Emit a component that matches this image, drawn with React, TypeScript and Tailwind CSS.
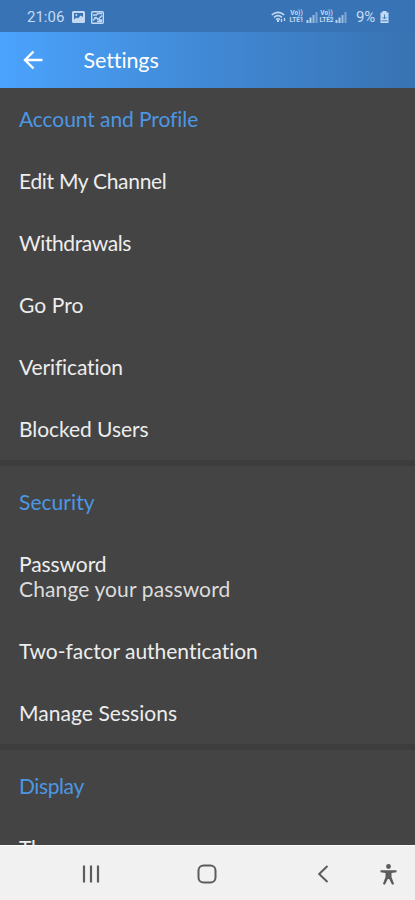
import React from "react";

interface SettingsItem {
    label: string;
    spacing: string;
    detail?: string;
    detailSpacing?: string;
}

interface SettingsGroup {
    title: string;
    spacing: string;
    items: SettingsItem[];
}

const groups: SettingsGroup[] = [
    {
        title: "Account and Profile",
        spacing: "tracking-[-0.08px]",
        items: [
            { label: "Edit My Channel", spacing: "tracking-[-0.3px]" },
            { label: "Withdrawals", spacing: "tracking-[-0.4px]" },
            { label: "Go Pro", spacing: "tracking-[0.1px]" },
            { label: "Verification", spacing: "tracking-[-0.13px]" },
            { label: "Blocked Users", spacing: "tracking-[-0.06px]" },
        ],
    },
    {
        title: "Security",
        spacing: "tracking-[0.05px]",
        items: [
            {
                label: "Password",
                spacing: "tracking-[-0.08px]",
                detail: "Change your password",
                detailSpacing: "tracking-[0.12px]",
            },
            { label: "Two-factor authentication", spacing: "tracking-[-0.03px]" },
            { label: "Manage Sessions", spacing: "tracking-[0.06px]" },
        ],
    },
    {
        title: "Display",
        spacing: "tracking-[-0.4px]",
        items: [{ label: "Theme", spacing: "tracking-[-0.3px]" }],
    },
];

const Signal: React.FC = () => (
    <svg className="w-[12px] h-[12px]" viewBox="0 0 12 12" fill="currentColor">
        <rect x="0.5" y="9" width="2" height="3" opacity="0.9" />
        <rect x="3.5" y="6.5" width="2" height="5.5" opacity="0.9" />
        <rect x="6.5" y="4" width="2" height="8" opacity="0.7" />
        <rect x="9.5" y="1" width="2" height="11" opacity="0.5" />
    </svg>
);

// Carrier tag in two stacked lines
const Volte: React.FC<{ line: string }> = ({ line }) => (
    <span className="flex w-[15px] flex-col items-center text-[6.5px] leading-[7px] font-bold">
        <span>Vo))</span>
        <span>{line}</span>
    </span>
);

const StatusBar: React.FC = () => (
    <div className="flex h-8 shrink-0 items-center bg-[#3874b5] pt-[2px] pl-[27px] font-[Roboto,sans-serif] text-[#c5daf2]">
        <span className="w-[38px] text-[15px] leading-[18px]">21:06</span>
        {/* Notification icons */}
        <svg className="ml-[7px] w-[13px] h-[12px]" viewBox="0 0 13 12">
            <rect width="13" height="12" rx="1.5" fill="currentColor" />
            <path d="M2 2h9v4L8.500 4.500 6 7.500 4.500 6.500 2 8.500z" fill="#3874b5" />
            <circle cx="4.300" cy="4" r="1" fill="currentColor" />
        </svg>
        <svg className="ml-[6px] w-[13px] h-[13px]" viewBox="0 0 13 13" fill="none" stroke="currentColor">
            <rect x="0.700" y="0.700" width="11.600" height="11.600" rx="1" strokeWidth="1.400" />
            <path d="M2 4h3.500l1-1.500h4.500M2 9.500l3-3 2 2 4-4M6 10.500h5M3 7h2M8 9h3" strokeWidth="1.300" />
        </svg>
        <div className="ml-[167px] flex items-center">
            <svg className="w-[16px] h-[12px]" viewBox="0 0 16 12" fill="none" stroke="currentColor">
                <path d="M0.800 3.800Q7 -1.200 13.200 3.800M3 6.300Q7 3 11 6.300M5 8.600Q7 7 9 8.600" strokeWidth="1.600" />
                <path d="M7 9v2" strokeWidth="2" />
                <path d="M10.500 8v3M13.500 7v3" strokeWidth="1.300" />
            </svg>
            <div className="ml-[2px]"><Volte line="LTE1" /></div>
            <div className="ml-[2px]"><Signal /></div>
            <div className="ml-[1px]"><Volte line="LTE2" /></div>
            <div className="ml-[1px]"><Signal /></div>
            <span className="ml-[9px] w-[21px] text-[15px] leading-[18px] tracking-[-0.3px]">9%</span>
            <svg className="ml-[3px] w-[9px] h-[12px]" viewBox="0 0 9 12">
                <path d="M2.500 0h4v1.500h2V12h-8V1.500h2z" fill="currentColor" />
                <path d="M4.500 3.500v4M2.500 6l2 2 2-2M1.500 9.800h6" fill="none" stroke="#3874b5" strokeWidth="0.9" />
            </svg>
        </div>
    </div>
);

const AppBar: React.FC = () => (
    <header className="flex h-14 shrink-0 items-center bg-linear-to-r from-[#4ba3fd] via-[#4189d5] to-[#3873b3] pl-[23px] text-white">
        <svg className="w-5 h-5" viewBox="0 0 20 20" fill="none" stroke="currentColor" strokeWidth="2.400">
            <path d="M19.500 10H2M10.500 1.500L2 10l8.500 8.500" />
        </svg>
        <h1 className="ml-[40.5px] text-[21.5px] leading-6 tracking-[-0.1px]">Settings</h1>
    </header>
);

const NavBar: React.FC = () => (
    <nav className="flex h-[55px] shrink-0 items-center border-t border-white bg-[#f1f1f1] pl-[82px] pt-[2px] text-[#5c5c5c]">
        <svg className="w-[18px] h-[18px]" viewBox="0 0 18 18" stroke="currentColor" strokeWidth="2.200">
            <path d="M2 0.500v17M9 0.500v17M16 0.500v17" />
        </svg>
        <svg className="ml-[97px] w-5 h-5" viewBox="0 0 20 20" fill="none" stroke="currentColor" strokeWidth="2">
            <rect x="1.500" y="1.500" width="17" height="17" rx="5" />
        </svg>
        <svg className="ml-[100px] w-[12px] h-[18px]" viewBox="0 0 12 18" fill="none" stroke="currentColor" strokeWidth="2">
            <path d="M10.500 1L2.200 9l8.300 8" />
        </svg>
        <svg className="ml-[51px] w-[17px] h-[21px]" viewBox="0 0 17 21" fill="currentColor">
            <circle cx="8.500" cy="2.500" r="2.400" />
            <path d="M0.500 6.200h16v2.100l-5 0.700v4l2.600 7-2 0.800L9.200 15H7.800l-2.900 5.800-2-0.800 2.600-7V9l-5-0.700z" />
        </svg>
    </nav>
);

const App: React.FC = () => {
    return (
        <div className="flex h-screen w-full flex-col overflow-hidden bg-[#444444] font-[Lato,sans-serif]">
            <StatusBar />
            <AppBar />
            <main className="min-h-0 flex-1 overflow-hidden text-[21px] leading-[25px] text-[#ededed]">
                {groups.map((group, idx) => (
                    <section key={group.title} className={idx > 0 ? "border-t-[6px] border-[#3d3d3d] pt-[5px]" : ""}>
                        <h2 className={`h-[62px] pt-[18px] pl-[19px] text-[#4c97e3] ${group.spacing}`}>
                            {group.title}
                        </h2>
                        <ul>
                            {group.items.map((item) => (
                                <li key={item.label} className="flex flex-col pt-[18px] pb-[19px] pl-[19px]">
                                    <span className={item.spacing}>{item.label}</span>
                                    {item.detail && (
                                        <span className={`text-[#dcdcdc] ${item.detailSpacing}`}>{item.detail}</span>
                                    )}
                                </li>
                            ))}
                        </ul>
                    </section>
                ))}
            </main>
            <NavBar />
        </div>
    );
};

export default App;
